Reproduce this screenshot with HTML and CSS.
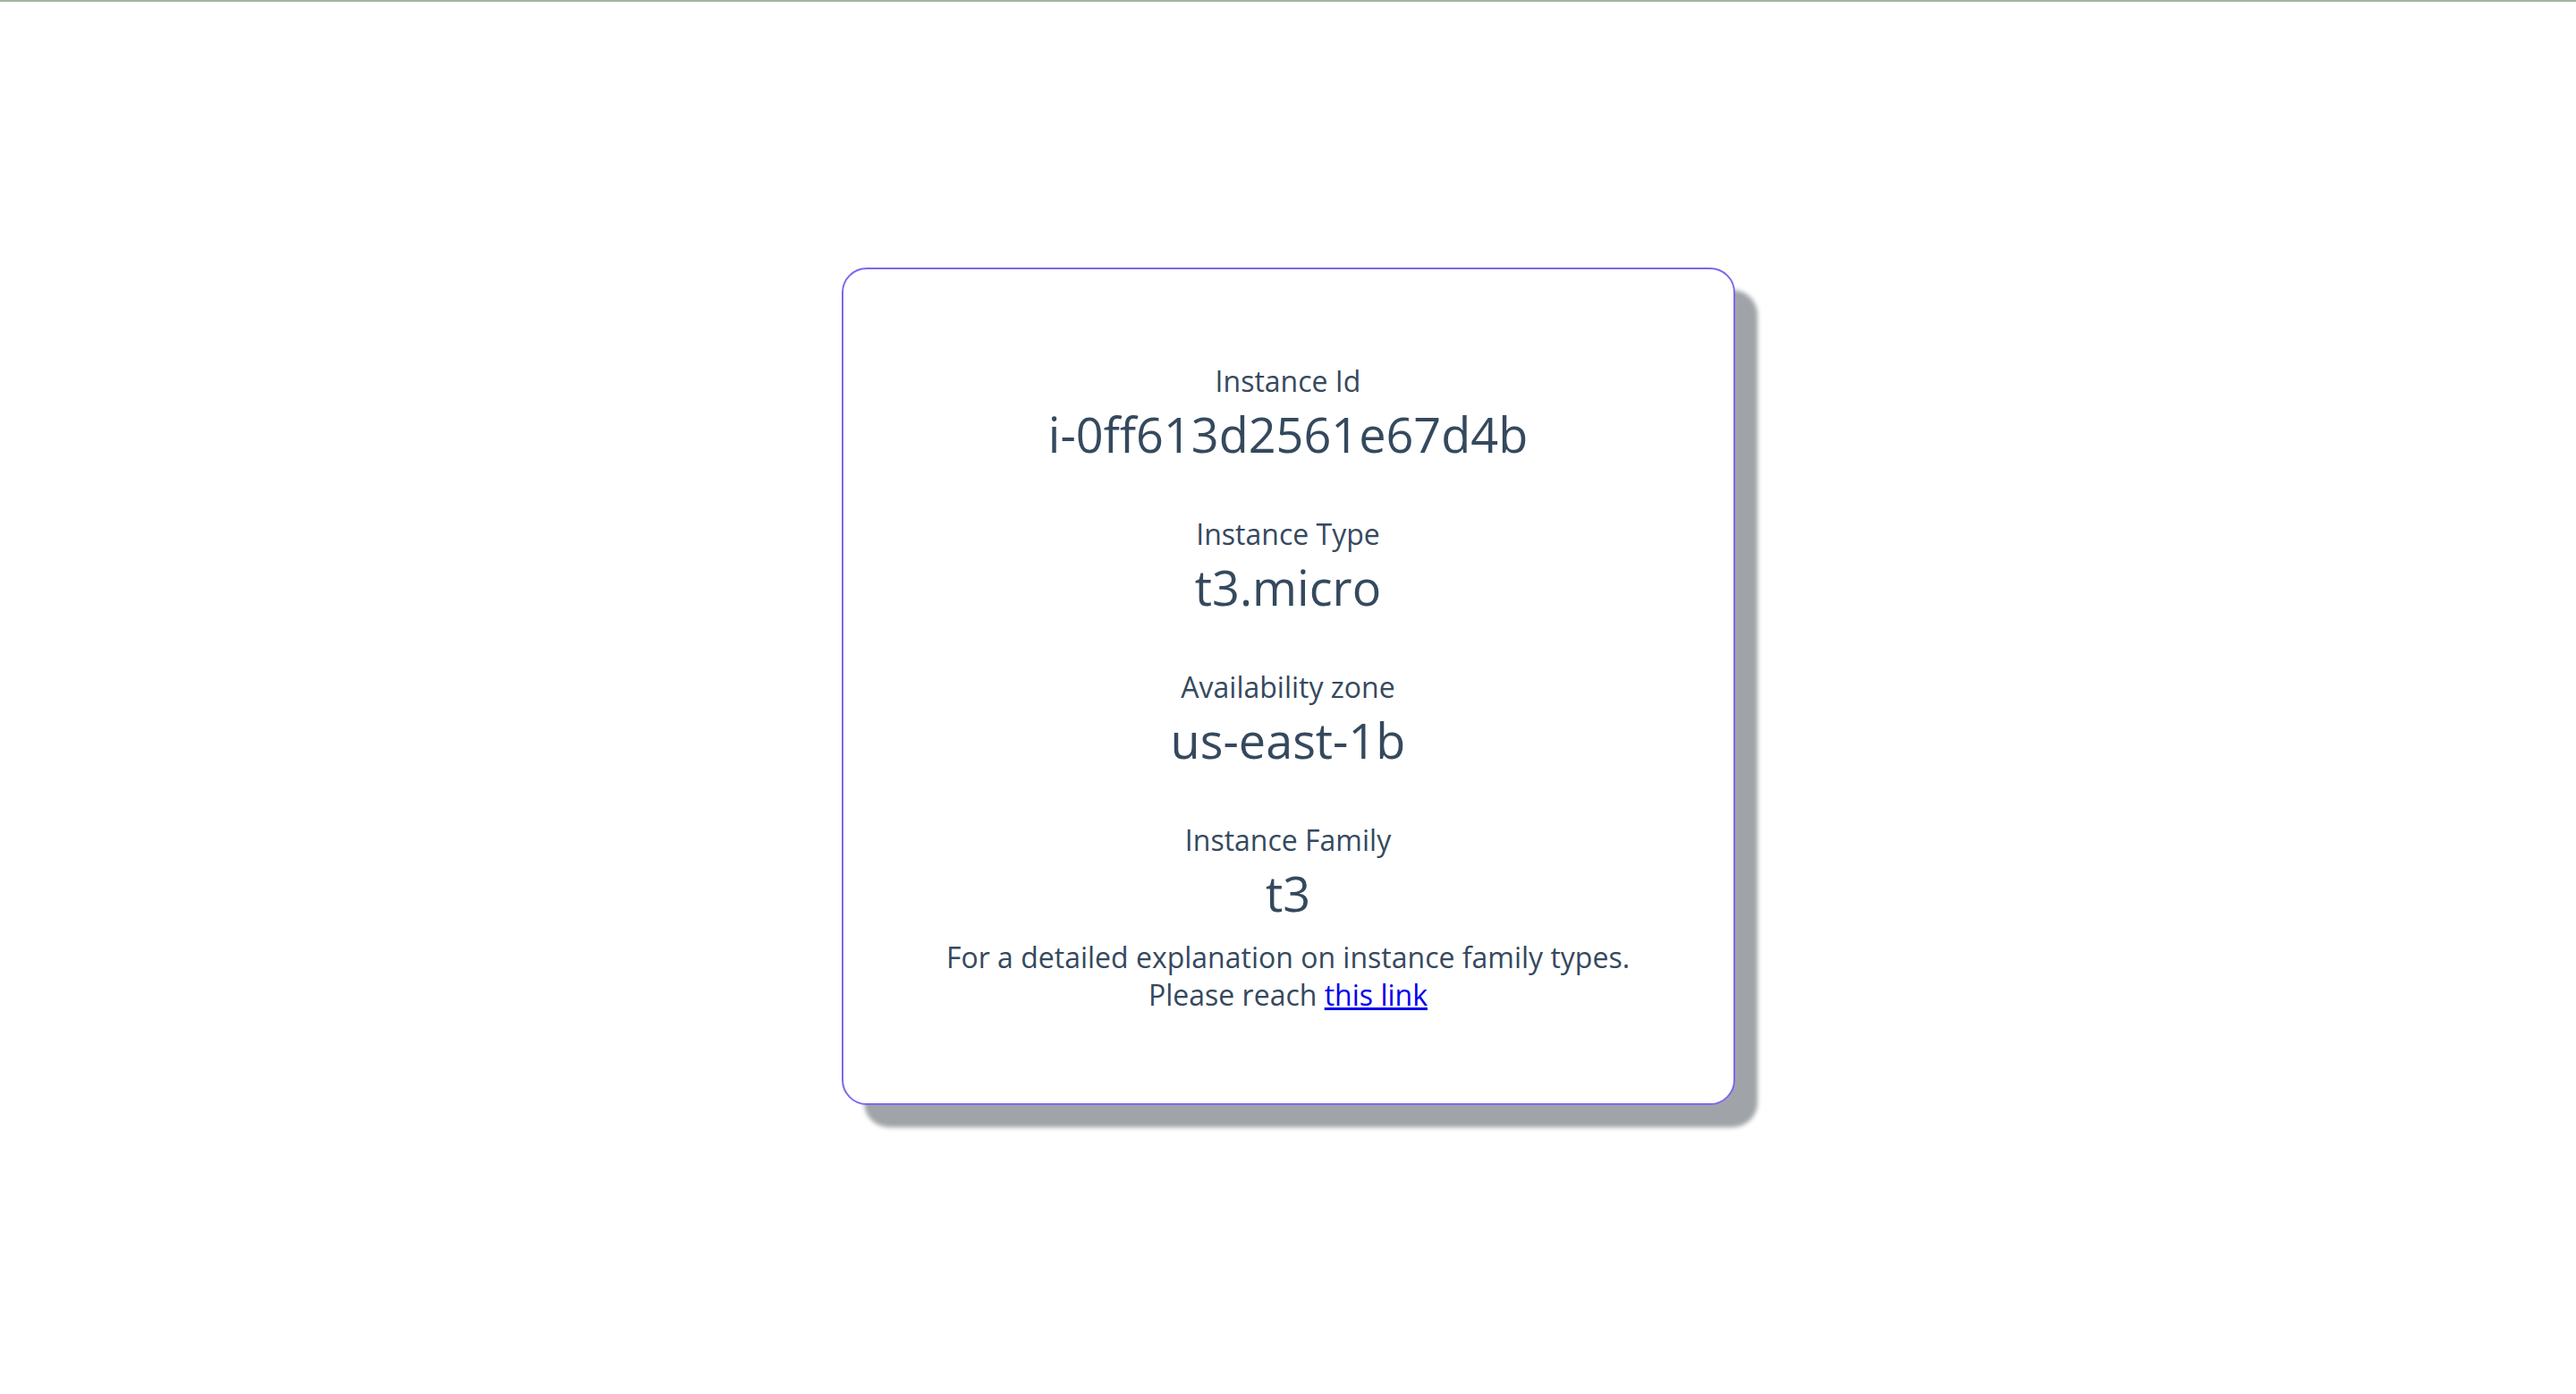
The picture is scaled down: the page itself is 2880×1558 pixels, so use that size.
FILE: index.html
```html
<!DOCTYPE html>
<html lang="en">
<head>
<meta charset="utf-8">
<title>Instance Info</title>
<link rel="stylesheet" href="styles.css">
</head>
<body>
<div class="topline"></div>
<main class="page">
  <section class="card">
    <div class="field">
      <div class="label">Instance Id</div>
      <div class="value">i-0ff613d2561e67d4b</div>
    </div>
    <div class="field">
      <div class="label">Instance Type</div>
      <div class="value">t3.micro</div>
    </div>
    <div class="field">
      <div class="label">Availability zone</div>
      <div class="value">us-east-1b</div>
    </div>
    <div class="field">
      <div class="label">Instance Family</div>
      <div class="value">t3</div>
    </div>
    <p class="note">For a detailed explanation on instance family types.<br>Please reach <a href="#">this link</a></p>
  </section>
</main>
</body>
</html>
```
FILE: styles.css
```css
html, body {
  margin: 0;
  padding: 0;
  background: #ffffff;
}
body {
  font-family: "Open Sans", "Noto Sans", sans-serif;
  color: #35495e;
  -webkit-font-smoothing: antialiased;
}
.topline {
  height: 2px;
  background: #a2b59f;
}
.page {
  box-sizing: border-box;
  min-height: 1556px;
  display: flex;
  justify-content: center;
  align-items: flex-start;
  padding-top: 297px;
}
.card {
  box-sizing: border-box;
  width: 999px;
  height: 936px;
  border: 2px solid #7b68ee;
  border-radius: 28px;
  box-shadow: 25px 25px 5px #a0a4a8;
  background: #fff;
  padding: 104px 40px 0;
  display: flex;
  flex-direction: column;
  align-items: center;
  gap: 53px;
  text-align: center;
}
.field {
  display: flex;
  flex-direction: column;
  align-items: center;
}
.label {
  font-size: 32px;
  line-height: 42px;
}
.value {
  font-size: 54px;
  font-weight: 500;
  line-height: 76px;
}
.note {
  margin: -40px 0 0;
  font-size: 32px;
  line-height: 42px;
}
.note a {
  color: #0000ee;
  text-decoration: underline;
}
```
